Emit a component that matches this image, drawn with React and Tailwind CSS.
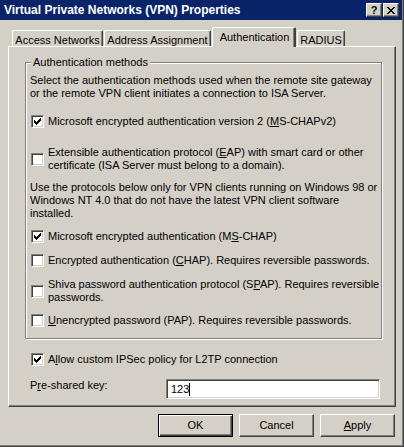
import React from "react";

const raised =
  "bg-[#d4d0c8] border border-t-white border-l-white border-r-[#404040] border-b-[#404040] shadow-[inset_-1px_-1px_0_#808080]";

function Key({ children }) {
  return <span className="underline underline-offset-[1px]">{children}</span>;
}

function CheckBox({ checked }) {
  return (
    <span className="relative block w-[13px] h-[13px] shrink-0 bg-white border border-t-[#808080] border-l-[#808080] border-r-white border-b-white shadow-[inset_1px_1px_0_#404040,inset_-1px_-1px_0_#d4d0c8]">
      {checked && (
        <svg
          className="absolute left-[-1px] top-[-1px]"
          width="13"
          height="13"
          viewBox="0 0 13 13"
          shapeRendering="crispEdges"
        >
          <path
            d="M3 5h1v3H3zM4 6h1v3H4zM5 7h1v3H5zM6 6h1v3H6zM7 5h1v3H7zM8 4h1v3H8zM9 3h1v3H9z"
            fill="#000"
          />
        </svg>
      )}
    </span>
  );
}

function Option({ checked, children, className = "" }) {
  return (
    <div className={`flex items-center ${className}`}>
      <CheckBox checked={checked} />
      <div className="ml-[4px] leading-[13px] whitespace-nowrap">{children}</div>
    </div>
  );
}

function Tab({ label, width, active }) {
  if (active) {
    return (
      <div
        className={`${width} relative z-10 -mb-px h-[20px] flex items-center justify-center bg-[#d4d0c8] border-t border-l border-t-white border-l-white border-r-2 border-r-[#404040] rounded-t-[2px] shadow-[inset_-1px_0_0_#808080]`}
      >
        <span className="pl-[2px]">{label}</span>
      </div>
    );
  }
  return (
    <div
      className={`${width} h-[16px] flex items-center justify-center pt-[3px] border-t border-l border-t-white border-l-white border-r border-r-[#404040] rounded-t-[2px] shadow-[inset_-1px_0_0_#808080]`}
    >
      {label}
    </div>
  );
}

function Button({ children, isDefault }) {
  return (
    <button
      className={
        isDefault
          ? "w-[75px] h-[23px] bg-[#d4d0c8] border border-black shadow-[inset_1px_1px_0_#fff,inset_-1px_-1px_0_#404040,inset_-2px_-2px_0_#808080]"
          : `w-[75px] h-[23px] ${raised}`
      }
    >
      {children}
    </button>
  );
}

export default function App() {
  return (
    <div
      className="w-[404px] h-[447px] bg-[#d4d0c8] text-black text-[11px] leading-[13px] border-r border-b border-r-[#404040] border-b-[#404040] shadow-[inset_-1px_-1px_0_#808080] overflow-hidden"
      style={{ fontFamily: '"Liberation Sans", Arial, sans-serif' }}
    >
      {/* Title bar */}
      <div className="h-[20px] mr-px bg-[#0a246a] flex items-center pl-[4px] pr-[3px]">
        <span className="text-white font-bold text-[12px] leading-[14px] flex-1 whitespace-nowrap">
          Virtual Private Networks (VPN) Properties
        </span>
        <div className="flex gap-px">
          <div className={`w-[16px] h-[14px] flex items-center justify-center font-bold text-[11px] ${raised}`}>
            ?
          </div>
          <div className={`w-[16px] h-[14px] flex items-center justify-center ${raised}`}>
            <svg width="8" height="7" viewBox="0 0 8 7" shapeRendering="crispEdges">
              <path
                d="M0 0h2v1H0zM6 0h2v1H6zM1 1h2v1H1zM5 1h2v1H5zM2 2h4v1H2zM3 3h2v1H3zM2 4h4v1H2zM1 5h2v1H1zM5 5h2v1H5zM0 6h2v1H0zM6 6h2v1H6z"
                fill="#000"
              />
            </svg>
          </div>
        </div>
      </div>

      <div className="pl-[8px] pr-[7px]">
        {/* Tabs */}
        <div className="h-[26px] flex items-end gap-px pl-[4px]">
          <Tab label="Access Networks" width="w-[91px]" />
          <Tab label="Address Assignment" width="w-[107px]" />
          <Tab label="Authentication" width="w-[84px]" active />
          <Tab label="RADIUS" width="w-[48px]" />
        </div>

        {/* Panel */}
        <div className="h-[361px] border border-t-white border-l-white border-r-[#404040] border-b-[#404040] shadow-[inset_-1px_-1px_0_#808080] pt-[15px]">
          <div className="relative ml-[16px] w-[357px] border border-[#808080] shadow-[1px_1px_0_#fff,inset_1px_1px_0_#fff] pt-[11px] pb-[11px] pl-[4px] pr-[4px] whitespace-nowrap">
            <span className="absolute left-[5px] top-[-7px] px-[2px] bg-[#d4d0c8]">
              Authentication methods
            </span>
            <p>
              Select the authentication methods used when the remote site gateway
              <br />
              or the remote VPN client initiates a connection to ISA Server.
            </p>
            <Option checked className="mt-[15px] pl-px">
              Microsoft encrypted authentication version 2 (<Key>M</Key>S-CHAPv2)
            </Option>
            <Option className="mt-[18px] pl-px">
              Extensible authentication protocol (<Key>E</Key>AP) with smart card or other
              <br />
              certificate (ISA Server must belong to a domain).
            </Option>
            <p className="mt-[9px]">
              Use the protocols below only for VPN clients running on Windows 98 or
              <br />
              Windows NT 4.0 that do not have the latest VPN client software
              <br />
              installed.
            </p>
            <Option checked className="mt-[10px] pl-px">
              Microsoft encrypted authentication (M<Key>S</Key>-CHAP)
            </Option>
            <Option className="mt-[11px] pl-px">
              Encrypted authentication (<Key>C</Key>HAP). Requires reversible passwords.
            </Option>
            <Option className="mt-[11px] pl-px">
              Shiva password authentication protocol (S<Key>P</Key>AP). Requires reversible
              <br />
              passwords.
            </Option>
            <Option className="mt-[10px] pl-px">
              <Key>U</Key>nencrypted password (PAP). Requires reversible passwords.
            </Option>
          </div>

          <Option checked className="mt-[14px] ml-[22px]">
            A<Key>l</Key>low custom IPSec policy for L2TP connection
          </Option>

          <div className="mt-[13px] ml-[21px] flex items-start">
            <span className="w-[136px]">
              P<Key>r</Key>e-shared key:
            </span>
            <div className="w-[214px] h-[20px] bg-white border border-t-[#808080] border-l-[#808080] border-r-white border-b-white shadow-[inset_1px_1px_0_#404040,inset_-1px_-1px_0_#d4d0c8] flex items-center pl-[4px]">
              <span>123</span>
              <span className="w-px h-[13px] bg-black" />
            </div>
          </div>
        </div>

        {/* Buttons */}
        <div className="mt-[7px] flex justify-end gap-[6px] pr-px">
          <Button isDefault>OK</Button>
          <Button>Cancel</Button>
          <Button>
            <Key>A</Key>pply
          </Button>
        </div>
      </div>
    </div>
  );
}
